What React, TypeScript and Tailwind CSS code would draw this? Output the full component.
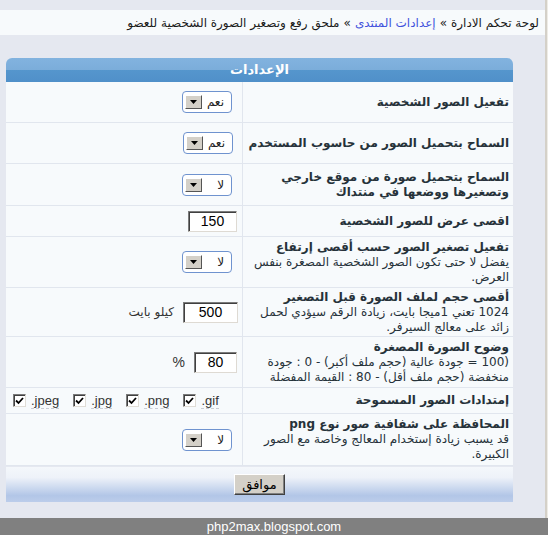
import React from 'react'

const arabic = "font-['Tahoma','DejaVu_Sans',sans-serif]"

function Select({ value }: { value: string }) {
    return (
        <div
            dir="ltr"
            className="flex h-[22px] w-[50px] items-center rounded-[4px] border border-[#6f93cf] bg-white pl-[2px] pr-[7px]"
        >
            <div className="flex h-[14px] w-[17px] items-center justify-center border border-t-white border-l-white border-b-[#555] border-r-[#555] bg-[#d4d0c8]">
                <svg width="7" height="4" viewBox="0 0 7 4">
                    <path d="M0 0h7L3.5 4z" fill="#000" />
                </svg>
            </div>
            <span className={`ml-auto text-[12px] leading-none text-[#222] ${arabic}`}>{value}</span>
        </div>
    )
}

function TextBox({ value, width }: { value: string; width: string }) {
    return (
        <div
            className={`flex h-[21px] items-center justify-center border border-t-[#7b7b7b] border-l-[#7b7b7b] border-b-[#dedad3] border-r-[#dedad3] bg-white font-['Liberation_Sans',sans-serif] text-[14px] text-black shadow-[inset_1px_1px_0_#404040] ${width}`}
        >
            {value}
        </div>
    )
}

function Check({ label }: { label: string }) {
    return (
        <div className="flex items-center gap-[5px]">
            <div className="flex h-[13px] w-[13px] items-center justify-center border border-t-[#7b7b7b] border-l-[#7b7b7b] border-b-[#e0ddd6] border-r-[#e0ddd6] bg-white shadow-[inset_1px_1px_0_#404040]">
                <svg width="9" height="8" viewBox="0 0 9 8">
                    <path d="M1 3.5l2.5 2.5L8 1" stroke="#000" strokeWidth="1.8" fill="none" />
                </svg>
            </div>
            <span className="border-b border-dashed border-[#c8ccd4] font-['Liberation_Sans',sans-serif] text-[13px] leading-[15px] text-[#333]">
                {label}
            </span>
        </div>
    )
}

type Row = {
    height: string
    title: string
    lines?: string[]
    control: React.ReactNode
}

const rows: Row[] = [
    { height: 'h-[41px]', title: 'تفعيل الصور الشخصية', control: <div className="pr-[10px]"><Select value="نعم" /></div> },
    { height: 'h-[41px]', title: 'السماح بتحميل الصور من حاسوب المستخدم', control: <div className="pr-[9px]"><Select value="نعم" /></div> },
    {
        height: 'h-[42px]',
        title: 'السماح بتحميل صورة من موقع خارجي',
        lines: ['__bold__وتصغيرها ووضعها في منتداك'],
        control: <div className="pr-[10px]"><Select value="لا" /></div>,
    },
    { height: 'h-[31px]', title: 'اقصى عرض للصور الشخصية', control: <div className="pr-[5px]"><TextBox value="150" width="w-[49px]" /></div> },
    {
        height: 'h-[51px]',
        title: 'تفعيل تصغير الصور حسب أقصى إرتفاع',
        lines: ['يفضل لا حتى تكون الصور الشخصية المصغرة بنفس', 'العرض.'],
        control: <div className="pr-[10px]"><Select value="لا" /></div>,
    },
    {
        height: 'h-[49px]',
        title: 'أقصى حجم لملف الصورة قبل التصغير',
        lines: ['1024 تعني 1ميجا بايت، زيادة الرقم سيؤدي لحمل', 'زائد على معالج السيرفر.'],
        control: (
            <div className="flex items-center gap-[9px] pr-[4px]">
                <TextBox value="500" width="w-[55px]" />
                <span className={`text-[12px] text-[#333] ${arabic}`}>كيلو بايت</span>
            </div>
        ),
    },
    {
        height: 'h-[51px]',
        title: 'وضوح الصورة المصغرة',
        lines: ['(100 = جودة عالية (حجم ملف أكبر) - 0 : جودة', 'منخفضة (حجم ملف أقل) - 80 : القيمة المفضلة'],
        control: (
            <div className="flex items-center gap-[9px] pr-[5px]">
                <TextBox value="80" width="w-[43px]" />
                <span className="font-['Liberation_Sans',sans-serif] text-[14px] text-[#333]">%</span>
            </div>
        ),
    },
    {
        height: 'h-[26px]',
        title: 'إمتدادات الصور المسموحة',
        control: (
            <div dir="ltr" className="flex w-full items-center gap-[14px] pl-[7px]">
                <Check label=".jpeg" />
                <Check label=".jpg" />
                <Check label=".png" />
                <Check label=".gif" />
            </div>
        ),
    },
    {
        height: 'h-[52px]',
        title: 'المحافظة على شفافية صور نوع png',
        lines: ['قد يسبب زيادة إستخدام المعالج وخاصة مع الصور', 'الكبيرة.'],
        control: <div className="pr-[10px]"><Select value="لا" /></div>,
    },
]

export default function App() {
    return (
        <div className="relative h-[535px] w-[548px] overflow-hidden bg-[#e5e8f0]">
            <div className="flex h-[518px]">
                <div className="flex-1 pt-[10px]">
                    {/* breadcrumb */}
                    <div
                        dir="rtl"
                        className={`flex h-[25px] items-center bg-[#f7fafc] pr-[6px] text-[12px] text-[#1a1a1a] ${arabic}`}
                    >
                        <span>لوحة تحكم الادارة</span>
                        <span className="mx-[4px]">»</span>
                        <span className="text-[#4152dc]">إعدادات المنتدى</span>
                        <span className="mx-[4px]">»</span>
                        <span>ملحق رفع وتصغير الصورة الشخصية للعضو</span>
                    </div>

                    {/* settings panel */}
                    <div className="ml-[6px] mt-[23px] w-[507px]">
                        <div
                            className={`flex h-[24px] items-center justify-center rounded-t-[6px] bg-[linear-gradient(#82b3df_0%,#7badda_50%,#5596cd_50%,#5090c9_100%)] text-[13px] font-bold text-white ${arabic}`}
                        >
                            الإعدادات
                        </div>
                        <div dir="rtl">
                            {rows.map((row, i) => (
                                <div
                                    key={i}
                                    className={`grid grid-cols-[271px_236px] border-b border-[#e1e6ee] bg-[#f7fafc] ${row.height}`}
                                >
                                    <div
                                        className={`flex flex-col justify-center whitespace-nowrap border-l border-[#e1e6ee] pr-[4px] text-[12px] leading-[15px] text-[#26323a] ${arabic}`}
                                    >
                                        <div className="font-bold">{row.title}</div>
                                        {row.lines?.map((line, j) =>
                                            line.startsWith('__bold__') ? (
                                                <div key={j} className="font-bold">
                                                    {line.slice(8)}
                                                </div>
                                            ) : (
                                                <div key={j}>{line}</div>
                                            )
                                        )}
                                    </div>
                                    <div className="flex items-center">{row.control}</div>
                                </div>
                            ))}
                        </div>
                        <div className="mt-[1px] flex h-[35px] items-center justify-center bg-[linear-gradient(#f4f7fb_0%,#eef2f9_30%,#b2c6e7_82%,#bccdea_100%)]">
                            <div
                                className={`flex h-[21px] w-[51px] items-center justify-center border border-t-white border-l-white border-b-[#404040] border-r-[#404040] bg-[#d4d0c8] text-[13px] text-black shadow-[inset_-1px_-1px_0_#808080] ${arabic}`}
                            >
                                موافق
                            </div>
                        </div>
                    </div>
                </div>
                <div className="w-[3px] border-l-2 border-[#d4d0c8] bg-[#eeece6]" />
            </div>
            <div className="flex h-[17px] items-center justify-center bg-[#808080] font-['Liberation_Sans',sans-serif] text-[13px] text-white">
                php2max.blogspot.com
            </div>
        </div>
    )
}
